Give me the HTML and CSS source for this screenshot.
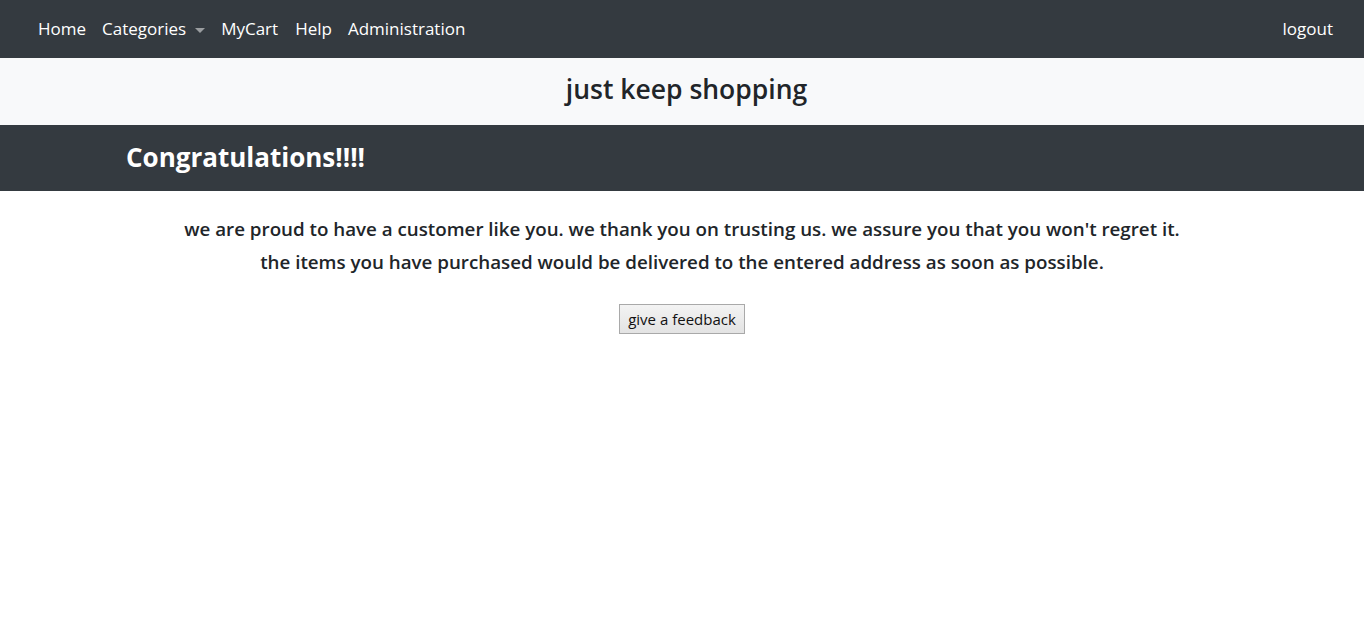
FILE: index.html
```html
<!DOCTYPE html>
<html>
<head>
<meta charset="utf-8">
<link rel="stylesheet" href="styles.css">
</head>
<body>
<nav class="topnav">
  <ul class="nav-left">
    <li><a class="nav-link" href="#">Home</a></li>
    <li><a class="nav-link dropdown" href="#">Categories<span class="caret"></span></a></li>
    <li><a class="nav-link" href="#">MyCart</a></li>
    <li class="nav-wide"><a class="nav-link" href="#">Help</a></li>
    <li><a class="nav-link" href="#">Administration</a></li>
  </ul>
  <a class="nav-link" href="#">logout</a>
</nav>
<header class="brand">
  <h3 class="brand-title">just keep shopping</h3>
</header>
<section class="banner">
  <h2 class="banner-title">Congratulations!!!!</h2>
</section>
<main class="content">
  <p class="message">we are proud to have a customer like you. we thank you on trusting us. we assure you that you won't regret it.<br>the items you have purchased would be delivered to the entered address as soon as possible.</p>
  <button class="feedback-btn" type="button">give a feedback</button>
</main>
</body>
</html>
```
FILE: styles.css
```css
* { box-sizing: border-box; }
body {
  margin: 0;
  font-family: "Open Sans", "Noto Sans", sans-serif;
  color: #212529;
  background: #fff;
}
.topnav {
  height: 58px;
  background: #343a40;
  display: flex;
  align-items: center;
  justify-content: space-between;
  padding: 0 23px 0 30px;
}
.nav-left {
  list-style: none;
  margin: 0;
  padding: 0;
  display: flex;
}
.nav-wide { margin-left: 1px; }
.nav-link {
  display: flex;
  align-items: center;
  padding: 0 8px;
  color: #fff;
  text-decoration: none;
  font-size: 17px;
  line-height: 24px;
}
.caret {
  display: inline-block;
  margin-left: 9px;
  width: 0;
  height: 0;
  border-left: 5px solid transparent;
  border-right: 5px solid transparent;
  border-top: 5px solid #9a9da0;
  margin-top: 2px;
}
.brand {
  height: 67px;
  background: #f8f9fa;
  display: flex;
  align-items: center;
  justify-content: center;
  padding: 0 0 6px 9px;
}
.brand-title {
  margin: 0;
  font-size: 26.5px;
  font-weight: 600;
  color: #212529;
}
.banner {
  height: 66px;
  background: #343a40;
  display: flex;
  align-items: center;
  padding-left: 126px;
  padding-bottom: 2px;
}
.banner-title {
  margin: 0;
  font-size: 26px;
  font-weight: 700;
  color: #fff;
}
.content {
  display: flex;
  flex-direction: column;
  align-items: center;
  padding-top: 21px;
}
.message {
  margin: 0;
  text-align: center;
  font-size: 18.75px;
  font-weight: 600;
  line-height: 33px;
  color: #212529;
}
.feedback-btn {
  margin-top: 26px;
  height: 30px;
  width: 126px;
  padding: 0;
  font-family: "Open Sans", sans-serif;
  font-size: 15px;
  color: #111;
  background: linear-gradient(#f3f3f3, #e3e3e3);
  border: 1px solid #a9a9a9;
  border-radius: 0;
}
```
